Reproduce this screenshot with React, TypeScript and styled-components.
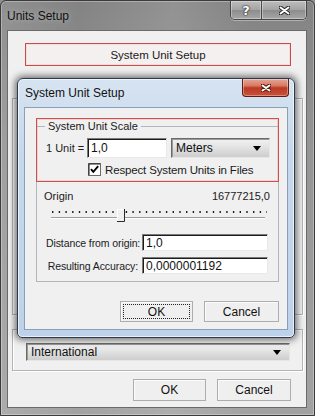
import React from 'react';
import styled, { createGlobalStyle } from 'styled-components';

const GlobalStyle = createGlobalStyle`
  html, body {
    margin: 0;
    padding: 0;
    background: #8f8f8f;
  }
  body {
    font-family: "Liberation Sans", Arial, sans-serif;
    font-size: 11px;
    color: #1b1b1b;
  }
  * {
    box-sizing: border-box;
  }
`;

const Window = styled.div`
  position: relative;
  width: 315px;
  height: 416px;
  display: flex;
  flex-direction: column;
  border: 1px solid #3b3b3b;
  border-radius: 6px 6px 0 0;
  overflow: hidden;
  background:
    linear-gradient(90deg, rgba(255, 255, 255, 0.1), transparent 25%, rgba(255, 255, 255, 0.12) 55%, transparent 80%),
    linear-gradient(180deg, #838383 0%, #959595 35%, #a2a2a2 100%);
  box-shadow: inset 0 0 0 1px rgba(255, 255, 255, 0.3);
`;

const TitleBar = styled.div`
  height: 29px;
  display: flex;
  align-items: center;
  justify-content: space-between;
  padding-left: 6px;
  flex-shrink: 0;
`;

const TitleText = styled.span<{ $size?: number }>`
  font-size: ${(p) => p.$size ?? 12}px;
  color: #111;
  text-shadow: 0 0 6px rgba(255, 255, 255, 0.45);
`;

const CaptionGroup = styled.div`
  align-self: flex-start;
  display: flex;
  height: 19px;
  margin-right: 7px;
  border: 1px solid #474747;
  border-top: none;
  border-radius: 0 0 5px 5px;
  overflow: hidden;
  box-shadow: 0 1px 0 rgba(255, 255, 255, 0.35);
`;

const CaptionButton = styled.div<{ $width: number }>`
  width: ${(p) => p.$width}px;
  display: flex;
  align-items: center;
  justify-content: center;
  background: linear-gradient(180deg, #bdbdbd 0%, #a4a4a4 48%, #8d8d8d 52%, #a6a6a6 100%);
  box-shadow: inset 0 0 0 1px rgba(255, 255, 255, 0.35);
  & + & {
    border-left: 1px solid #4a4a4a;
  }
`;

const HelpGlyph = styled.span`
  font-family: "DejaVu Sans", sans-serif;
  font-weight: bold;
  font-size: 13px;
  color: #fff;
  text-shadow: 0 0 1px #222, 0 0 1px #222, 0 0 2px #333;
`;

const Client = styled.div`
  flex: 1;
  margin: 0 7px 7px 6px;
  border: 1px solid #6a6a6a;
  background: #f0f0f0;
  display: flex;
  flex-direction: column;
`;

const HighlightButton = styled.div`
  margin: 12px 0 0 17px;
  width: 266px;
  height: 23px;
  display: flex;
  align-items: center;
  justify-content: center;
  font-size: 11.5px;
  border: 1px solid #c94c4c;
  background: #f4f0ef;
  box-shadow: inset 0 0 0 1px #f8dcdc;
`;

const GroupFrame = styled.div<{ $height: number; $top: number }>`
  margin: ${(p) => p.$top}px 0 0 4px;
  width: 291px;
  height: ${(p) => p.$height}px;
  border: 1px solid #b4b4b4;
  box-shadow: inset 1px 1px 0 #fff, 1px 1px 0 #fff;
  padding: 13px 0 0 13px;
`;

const DropDown = styled.div<{ $width: number; $height: number }>`
  width: ${(p) => p.$width}px;
  height: ${(p) => p.$height}px;
  display: flex;
  align-items: center;
  justify-content: space-between;
  padding: 0 8px 0 4px;
  border: 1px solid;
  border-color: #6b6b6b #e6e6e6 #e6e6e6 #6b6b6b;
  box-shadow: inset 1px 1px 0 #9a9a9a;
  background: linear-gradient(180deg, #f2f2f2 0%, #e3e3e3 45%, #cdcdcd 100%);
  font-size: 12px;
  color: #111;
`;

const Arrow = styled.span`
  width: 0;
  height: 0;
  border-left: 4px solid transparent;
  border-right: 4px solid transparent;
  border-top: 5px solid #000;
`;

const ButtonRow = styled.div<{ $gap: number; $right: number; $top: string }>`
  display: flex;
  justify-content: flex-end;
  gap: ${(p) => p.$gap}px;
  margin: ${(p) => p.$top} ${(p) => p.$right}px 0 0;
`;

const PushButton = styled.div<{ $width: number; $height: number; $focused?: boolean }>`
  position: relative;
  width: ${(p) => p.$width}px;
  height: ${(p) => p.$height}px;
  display: flex;
  align-items: center;
  justify-content: center;
  font-size: 12px;
  color: #111;
  background: #efefef;
  border: 1px solid #adadad;
  box-shadow: inset 1px 1px 0 #fbfbfb;
  ${(p) =>
    p.$focused &&
    `
    &::after {
      content: '';
      position: absolute;
      inset: 2px;
      border: 1px dotted #222;
    }
  `}
`;

/* ---------- inner dialog (floats above the outer one) ---------- */

const Dialog = styled.div`
  position: absolute;
  left: 16px;
  top: 77px;
  width: 278px;
  height: 260px;
  display: flex;
  flex-direction: column;
  padding: 0 6px 7px 6px;
  border: 1px solid #2d3a4a;
  border-radius: 6px 6px 5px 5px;
  background: linear-gradient(180deg, #d6e3f1 0%, #c6d8ec 30%, #bdd2ea 100%);
  box-shadow:
    0 0 7px 2px rgba(0, 0, 0, 0.55),
    inset 0 0 0 1px rgba(255, 255, 255, 0.65);
`;

const DialogTitleBar = styled.div`
  height: 28px;
  display: flex;
  align-items: center;
  justify-content: space-between;
  padding-left: 1px;
  flex-shrink: 0;
`;

const CloseButton = styled.div`
  align-self: flex-start;
  width: 47px;
  height: 18px;
  margin-right: -1px;
  display: flex;
  align-items: center;
  justify-content: center;
  border: 1px solid #5b1d14;
  border-top: none;
  border-radius: 0 0 4px 4px;
  background: linear-gradient(180deg, #e7a596 0%, #d57a64 40%, #bb3a22 52%, #c95238 100%);
  box-shadow: inset 0 0 0 1px rgba(255, 255, 255, 0.35);
`;

const DialogClient = styled.div`
  flex: 1;
  display: flex;
  flex-direction: column;
  border: 1px solid #8aa0ba;
  background: #f0f0f0;
  padding: 0 8px 7px 11px;
`;

const GroupWrap = styled.div`
  position: relative;
  margin-top: 12px;
`;

const GroupBox = styled.fieldset`
  margin: 0;
  padding: 0 8px 7px 9px;
  border: 1px solid #b0b6bc;
  min-width: 0;
`;

const Legend = styled.legend`
  margin-left: -1px;
  padding: 0 3px;
  line-height: 13px;
  font-size: 11px;
`;

const Highlight = styled.div`
  position: absolute;
  left: 0;
  right: 0;
  top: -2px;
  height: 64px;
  border: 1px solid #d04f4f;
  box-shadow: inset 0 0 0 1px rgba(220, 120, 120, 0.25);
  pointer-events: none;
`;

const Row = styled.div<{ $top: number; $height: number }>`
  display: flex;
  align-items: center;
  margin-top: ${(p) => p.$top}px;
  height: ${(p) => p.$height}px;
`;

const UnitLabel = styled.span`
  width: 41px;
  white-space: nowrap;
`;

const Field = styled.div<{ $width: number; $height: number }>`
  width: ${(p) => p.$width}px;
  height: ${(p) => p.$height}px;
  display: flex;
  align-items: center;
  padding-left: 3px;
  background: #fff;
  border: 1px solid;
  border-color: #7a7a7a #e9e9e9 #e9e9e9 #7a7a7a;
  box-shadow: inset 1px 1px 0 #1c1c1c;
  font-size: 12px;
  color: #111;
`;

const CheckRow = styled.div`
  display: flex;
  align-items: center;
  gap: 4px;
  margin: 5px 0 0 42px;
  height: 13px;
  font-size: 11.5px;
  letter-spacing: -0.15px;
`;

const OriginRow = styled.div`
  display: flex;
  justify-content: space-between;
  align-items: center;
  margin: 13px 0 0 -2px;
  height: 13px;
`;

const SliderBox = styled.div`
  margin: 3px 0 0 5px;
  height: 18px;
`;

const FieldLabel = styled.span`
  width: 96px;
  padding-right: 4px;
  text-align: right;
  white-space: nowrap;
  font-size: 10.5px;
  letter-spacing: -0.1px;
`;

const CheckIcon = () => (
  <svg width="13" height="13" viewBox="0 0 13 13">
    <rect x="0.5" y="0.5" width="12" height="12" fill="#fff" stroke="#6b6b6b" />
    <path d="M1 1 H12 M1 1 V12" stroke="#1c1c1c" strokeWidth="1" />
    <path d="M3 6.2 L5.3 8.8 L10.2 3.2" fill="none" stroke="#000" strokeWidth="1.9" />
  </svg>
);

const CaptionX = ({ w, h, light }: { w: number; h: number; light?: boolean }) => (
  <svg width={w} height={h} viewBox={`0 0 ${w} ${h}`}>
    <path
      d={`M1.5 1.5 L${w - 1.5} ${h - 1.5} M${w - 1.5} 1.5 L1.5 ${h - 1.5}`}
      stroke={light ? '#5a1a10' : '#2a2a2a'}
      strokeWidth="4"
      strokeLinecap="round"
    />
    <path
      d={`M1.5 1.5 L${w - 1.5} ${h - 1.5} M${w - 1.5} 1.5 L1.5 ${h - 1.5}`}
      stroke="#fff"
      strokeWidth="2"
      strokeLinecap="round"
    />
  </svg>
);

const Slider = () => {
  const ticks = Array.from({ length: 33 }, (_, i) => 1 + i * 6.7);
  return (
    <svg width="216" height="18" viewBox="0 0 216 18">
      {ticks.map((x) => (
        <rect key={x} x={x} y="6" width="1.4" height="2" fill="#1e1e1e" />
      ))}
      <line x1="0" y1="12.5" x2="214" y2="12.5" stroke="#9c9c9c" />
      <line x1="0" y1="13.5" x2="214" y2="13.5" stroke="#ffffff" />
      <rect x="66" y="4" width="8" height="13" fill="#f0f0f0" />
      <path d="M66.5 16 V4.5 H73" stroke="#fff" fill="none" />
      <path d="M73.5 4 V16.5 H66" stroke="#2a2a2a" fill="none" />
    </svg>
  );
};

export default function App() {
  return (
    <>
      <GlobalStyle />
      <Window>
        <TitleBar>
          <TitleText>Units Setup</TitleText>
          <CaptionGroup>
            <CaptionButton $width={30}>
              <HelpGlyph>?</HelpGlyph>
            </CaptionButton>
            <CaptionButton $width={45}>
              <CaptionX w={11} h={9} />
            </CaptionButton>
          </CaptionGroup>
        </TitleBar>

        <Client>
          <HighlightButton>System Unit Setup</HighlightButton>
          <GroupFrame $top={32} $height={217} />
          <GroupFrame $top={14} $height={42}>
            <DropDown $width={264} $height={18}>
              International
              <Arrow />
            </DropDown>
          </GroupFrame>
          <ButtonRow $gap={11} $right={15} $top="8px">
            <PushButton $width={73} $height={22}>OK</PushButton>
            <PushButton $width={74} $height={22}>Cancel</PushButton>
          </ButtonRow>
        </Client>

        <Dialog>
          <DialogTitleBar>
            <TitleText>System Unit Setup</TitleText>
            <CloseButton>
              <CaptionX w={10} h={8} light />
            </CloseButton>
          </DialogTitleBar>

          <DialogClient>
            <GroupWrap>
              <GroupBox>
                <Legend>System Unit Scale</Legend>
                <Row $top={5} $height={20}>
                  <UnitLabel>1 Unit =</UnitLabel>
                  <Field $width={80} $height={20}>1,0</Field>
                  <DropDown $width={99} $height={20} style={{ marginLeft: 4 }}>
                    Meters
                    <Arrow />
                  </DropDown>
                </Row>
                <CheckRow>
                  <CheckIcon />
                  Respect System Units in Files
                </CheckRow>
                <OriginRow>
                  <span>Origin</span>
                  <span>16777215,0</span>
                </OriginRow>
                <SliderBox>
                  <Slider />
                </SliderBox>
                <Row $top={11} $height={17}>
                  <FieldLabel>Distance from origin:</FieldLabel>
                  <Field $width={126} $height={17}>1,0</Field>
                </Row>
                <Row $top={6} $height={17}>
                  <FieldLabel>Resulting Accuracy:</FieldLabel>
                  <Field $width={126} $height={17}>0,0000001192</Field>
                </Row>
              </GroupBox>
              <Highlight />
            </GroupWrap>
            <ButtonRow $gap={11} $right={0} $top="auto">
              <PushButton $width={73} $height={21} $focused>OK</PushButton>
              <PushButton $width={75} $height={21}>Cancel</PushButton>
            </ButtonRow>
          </DialogClient>
        </Dialog>
      </Window>
    </>
  );
}
